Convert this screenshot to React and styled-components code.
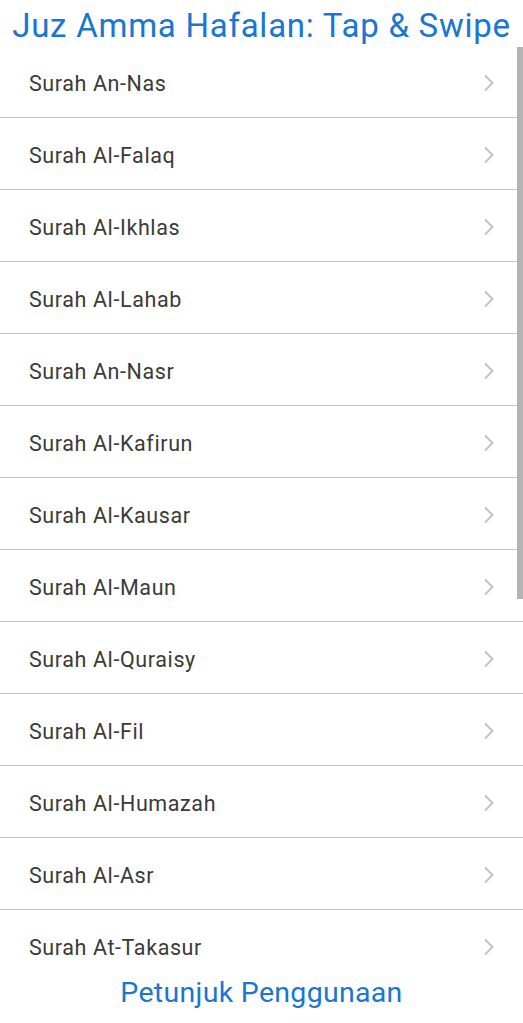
import React from 'react'
import styled, {createGlobalStyle} from 'styled-components'

const Global = createGlobalStyle`
    html, body {
        margin: 0;
        padding: 0;
        background: #ffffff;
    }
    body {
        font-family: Roboto, "Liberation Sans", sans-serif;
    }
`

const Page = styled.div`
    height: 1023px;
    display: flex;
    flex-direction: column;
    background: #ffffff;
    overflow: hidden;
`

const Title = styled.h1`
    margin: 0;
    height: 46px;
    display: flex;
    align-items: center;
    justify-content: center;
    font-size: 33px;
    font-weight: 400;
    letter-spacing: 0.75px;
    color: #1976d2;
    white-space: nowrap;
    padding-top: 4px;
    box-sizing: border-box;
`

const ListWrap = styled.div`
    position: relative;
    flex: 1;
    overflow: hidden;
`

const List = styled.ul`
    list-style: none;
    margin: 0;
    padding: 0;
`

const Row = styled.li`
    height: 72px;
    display: flex;
    align-items: center;
    justify-content: space-between;
    padding: 3px 28px 0 29px;
    border-bottom: 1px solid #c6c6c6;
    box-sizing: border-box;
    font-size: 21.5px;
    letter-spacing: 0.6px;
    color: #3a3a3a;
`

const Scrollbar = styled.div`
    position: absolute;
    top: 1px;
    right: 0;
    width: 6px;
    height: 552px;
    background: #b4b4b4;
`

const Footer = styled.div`
    height: 53px;
    display: flex;
    align-items: flex-start;
    justify-content: center;
    font-size: 28.5px;
    letter-spacing: 0.3px;
    color: #1976d2;
    background: #ffffff;
    padding-top: 6px;
    box-sizing: border-box;
`

const Chevron = () => (
    <svg width="12" height="18" viewBox="0 0 12 18">
        <path d="M2 1.5 L9.5 9 L2 16.5" fill="none" stroke="#c2c2c2" strokeWidth="2"/>
    </svg>
)

const surahs = [
    'An-Nas', 'Al-Falaq', 'Al-Ikhlas', 'Al-Lahab', 'An-Nasr', 'Al-Kafirun',
    'Al-Kausar', 'Al-Maun', 'Al-Quraisy', 'Al-Fil', 'Al-Humazah', 'Al-Asr',
    'At-Takasur'
]

const App = () => {
    return (
        <Page>
            <Global/>
            <Title>Juz Amma Hafalan: Tap &amp; Swipe</Title>
            <ListWrap>
                <List>
                    {surahs.map((s) => (
                        <Row key={s}>
                            <span>Surah {s}</span>
                            <Chevron/>
                        </Row>
                    ))}
                </List>
                <Scrollbar/>
            </ListWrap>
            <Footer>Petunjuk Penggunaan</Footer>
        </Page>
    )
}

export default App
